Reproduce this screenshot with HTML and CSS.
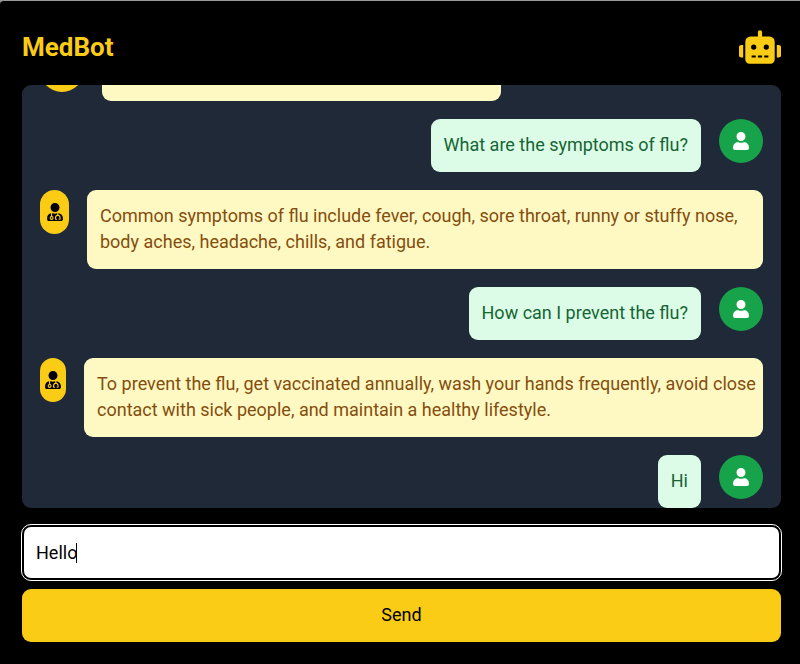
FILE: index.html
```html
<!DOCTYPE html>
<html lang="en">
<head>
<meta charset="utf-8">
<meta name="viewport" content="width=device-width, initial-scale=1">
<title>MedBot</title>
<link rel="stylesheet" href="styles.css">
</head>
<body>
<svg class="symbols" aria-hidden="true">
  <symbol id="doctor" viewBox="0 0 448 512"><path d="M224 256c70.7 0 128-57.3 128-128S294.7 0 224 0 96 57.3 96 128s57.3 128 128 128zM104 424c0 13.3 10.7 24 24 24s24-10.7 24-24-10.7-24-24-24-24 10.7-24 24zm216-135.4v49c36.5 7.4 64 39.8 64 78.4v41.7c0 7.6-5.4 14.2-12.9 15.7l-32.2 6.4c-4.3.9-8.5-1.9-9.4-6.3l-3.1-15.7c-.9-4.3 1.9-8.6 6.3-9.4l19.3-3.9V416c0-62.8-96-65.1-96 1.9v26.7l19.3 3.9c4.3.9 7.1 5.1 6.3 9.4l-3.1 15.7c-.9 4.3-5.1 7.1-9.4 6.3l-31.2-4.2c-7.9-1.1-13.8-7.8-13.8-15.9V416c0-38.6 27.5-70.9 64-78.4v-45.2c-2.2.7-4.4 1.1-6.6 1.9-18 6.3-37.3 9.8-57.4 9.8s-39.4-3.5-57.4-9.8c-7.4-2.6-14.9-4.2-22.6-5.2v81.6c23.1 6.9 40 28.1 40 53.4 0 30.9-25.1 56-56 56s-56-25.1-56-56c0-25.3 16.9-46.5 40-53.4v-80.4C48.5 301 0 355.8 0 422.4v44.8C0 491.9 20.1 512 44.8 512h358.4c24.7 0 44.8-20.1 44.8-44.8v-44.8c0-72-56.8-130.3-128-133.8z"/></symbol>
  <symbol id="user" viewBox="0 0 448 512"><path d="M224 256c70.7 0 128-57.3 128-128S294.7 0 224 0 96 57.3 96 128s57.3 128 128 128zm89.6 32h-16.7c-22.2 10.2-46.9 16-72.9 16s-50.6-5.8-72.9-16h-16.7C60.2 288 0 348.2 0 422.4V464c0 26.5 21.5 48 48 48h352c26.5 0 48-21.5 48-48v-41.6c0-74.2-60.2-134.4-134.4-134.4z"/></symbol>
</svg>
<main class="app">
  <header class="header">
    <h1 class="title">MedBot</h1>
    <svg class="robot" viewBox="0 0 640 512" aria-hidden="true"><path d="M32,224H64V416H32A32,32,0,0,1,0,384V256A32,32,0,0,1,32,224Zm512-48V448a64,64,0,0,1-64,64H160a64,64,0,0,1-64-64V176a80,80,0,0,1,80-80H288V32a32,32,0,0,1,64,0V96H464A80,80,0,0,1,544,176ZM264,256a40,40,0,1,0-40,40A40,40,0,0,0,264,256Zm-8,128H192v32h64Zm96,0H288v32h64ZM456,256a40,40,0,1,0-40,40A40,40,0,0,0,456,256Zm-8,128H384v32h64ZM640,256V384a32,32,0,0,1-32,32H576V224h32A32,32,0,0,1,640,256Z"/></svg>
  </header>

  <section class="chat" aria-label="Conversation">
    <div class="message bot">
      <span class="avatar"><svg class="icon"><use href="#doctor"/></svg></span>
      <p class="bubble">Hello! I'm MedBot. How can I assist you today?</p>
    </div>
    <div class="message user">
      <p class="bubble">What are the symptoms of flu?</p>
      <span class="avatar"><svg class="icon"><use href="#user"/></svg></span>
    </div>
    <div class="message bot">
      <span class="avatar narrow"><svg class="icon"><use href="#doctor"/></svg></span>
      <p class="bubble wide">Common symptoms of flu include fever, cough, sore throat, runny or stuffy nose, body aches, headache, chills, and fatigue.</p>
    </div>
    <div class="message user">
      <p class="bubble">How can I prevent the flu?</p>
      <span class="avatar"><svg class="icon"><use href="#user"/></svg></span>
    </div>
    <div class="message bot">
      <span class="avatar slim"><svg class="icon"><use href="#doctor"/></svg></span>
      <p class="bubble wide">To prevent the flu, get vaccinated annually, wash your hands frequently, avoid close contact with sick people, and maintain a healthy lifestyle.</p>
    </div>
    <div class="message user">
      <p class="bubble">Hi</p>
      <span class="avatar"><svg class="icon"><use href="#user"/></svg></span>
    </div>
  </section>

  <form class="composer">
    <div class="field">
      <input class="input" type="text" value="Hello" aria-label="Message">
      <span class="caret"></span>
    </div>
    <button class="send" type="button">Send</button>
  </form>
</main>
</body>
</html>
```
FILE: styles.css
```css
* {
  box-sizing: border-box;
}

html {
  background: #fff;
}

body {
  margin: 0;
  background: #999;
  font-family: Roboto, "Liberation Sans", sans-serif;
  font-size: 18px;
  line-height: 26px;
}

.symbols {
  display: none;
}

.app {
  display: flex;
  flex-direction: column;
  height: 100vh;
  padding: 28px 19px 22px 22px;
  background: #000;
  border-top: 1px solid #999;
  border-top-left-radius: 4px;
}

.header {
  display: flex;
  align-items: center;
  justify-content: space-between;
  margin-bottom: 20px;
  color: #facc15;
}

.title {
  margin: 0;
  font-size: 26px;
  font-weight: 700;
  line-height: 36px;
}

.robot {
  width: 42px;
  height: 34px;
  fill: currentColor;
}

.chat {
  display: flex;
  flex: 1 1 0;
  flex-direction: column;
  justify-content: flex-end;
  gap: 18px;
  min-height: 0;
  padding: 0 18px;
  overflow: hidden;
  background: #1f2937;
  border-radius: 9px;
}

.message {
  display: flex;
  flex-shrink: 0;
  align-items: flex-start;
  gap: 18px;
}

.message.user {
  justify-content: flex-end;
}

.bubble {
  margin: 0;
  padding: 13px 13px 14px;
  border-radius: 9px;
}

.bubble.wide {
  flex: 1;
  padding-right: 4px;
}

.bot .bubble {
  background: #fef9c3;
  color: #854d0e;
}

.user .bubble {
  background: #dcfce7;
  color: #166534;
}

.avatar {
  display: flex;
  flex: none;
  align-items: center;
  justify-content: center;
  width: 44px;
  height: 44px;
  border-radius: 22px;
}

.avatar.narrow {
  width: 29px;
}

.avatar.slim {
  width: 26px;
}

.bot .avatar {
  background: #facc15;
  fill: #000;
}

.user .avatar {
  background: #16a34a;
  fill: #fff;
}

.icon {
  width: 16px;
  height: 18px;
}

.composer {
  display: flex;
  flex-direction: column;
  gap: 9px;
  margin-top: 17px;
}

.field {
  position: relative;
}

.input {
  display: block;
  width: 100%;
  height: 55px;
  padding: 0 12px;
  border: 2px solid #000;
  border-radius: 9px;
  outline: 1px solid #fff;
  background: #fff;
  color: #000;
  font: inherit;
}

.caret {
  position: absolute;
  top: 18px;
  left: 54px;
  width: 1px;
  height: 20px;
  background: #000;
}

.send {
  padding: 13px 18px 14px;
  border: 0;
  border-radius: 9px;
  background: #facc15;
  color: #000;
  font: inherit;
}
```
